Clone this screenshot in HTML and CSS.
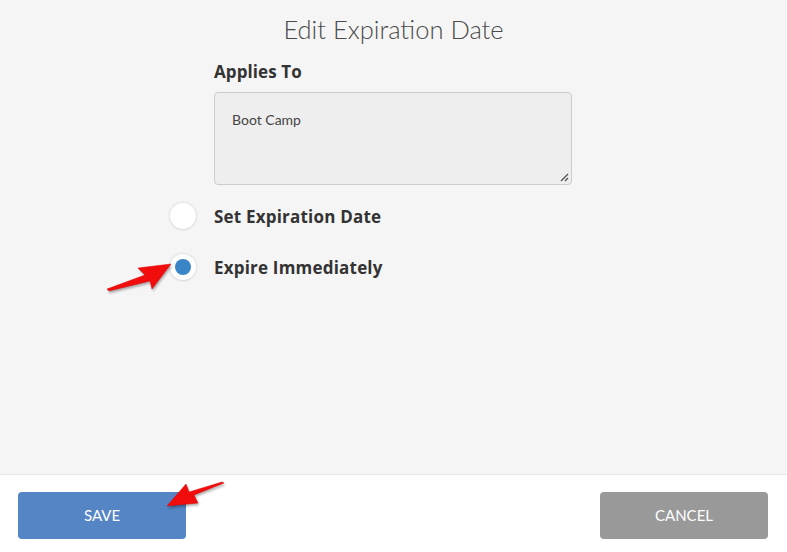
FILE: index.html
```html
<!DOCTYPE html>
<html>
<head>
<meta charset="utf-8">
<link rel="stylesheet" href="styles.css">
</head>
<body>
<div class="modal">
  <div class="main">
    <h1 class="title">Edit Expiration Date</h1>
    <div class="form">
      <div class="field">
        <div class="label">Applies To</div>
        <div class="textarea">Boot Camp
          <svg class="grip" width="10" height="10" viewBox="0 0 10 10"><path d="M2 9 L9 2 M6 9 L9 6" stroke="#555" stroke-width="1.4" fill="none"/></svg>
        </div>
      </div>
      <div class="radio-row">
        <span class="radio"></span>
        <span class="radio-label">Set Expiration Date</span>
      </div>
      <div class="radio-row">
        <span class="radio checked"><span class="dot"></span></span>
        <span class="radio-label">Expire Immediately</span>
      </div>
    </div>
  </div>
  <div class="footer">
    <button class="btn save">SAVE</button>
    <button class="btn cancel">CANCEL</button>
  </div>
  <svg class="arrow arrow1" width="80" height="40" viewBox="0 0 80 40">
    <path d="M2 33 L40 19 L33 12 L66 8 L47 33 L45 25 L4 35 Z" fill="#f20d0d" stroke="#d00" stroke-width="0.5"/>
  </svg>
  <svg class="arrow arrow2" width="70" height="40" viewBox="0 0 70 40">
    <path d="M60 3 L30 15 L34 23 L3 26 L22 4 L25 12 L58 2 Z" fill="#f20d0d" stroke="#d00" stroke-width="0.5"/>
  </svg>
</div>
</body>
</html>
```
FILE: styles.css
```css
html, body {
  margin: 0;
  padding: 0;
  width: 787px;
  height: 552px;
  overflow: hidden;
  font-family: Lato, "Open Sans", sans-serif;
}
.modal {
  position: relative;
  width: 787px;
  height: 552px;
  display: flex;
  flex-direction: column;
}
.main {
  background: #f5f5f5;
  height: 474px;
  box-sizing: border-box;
  padding-top: 12px;
}
.title {
  margin: 0;
  text-align: center;
  font-weight: 300;
  font-size: 25.5px;
  line-height: 34px;
  color: #4a4a4a;
}
.form {
  margin-left: 170px;
  width: 402px;
  margin-top: 15px;
}
.field {
  padding-left: 44px;
}
.label {
  font-family: "Open Sans", Lato, sans-serif;
  font-weight: 700;
  font-size: 17px;
  letter-spacing: 0.1px;
  line-height: 22px;
  color: #333;
}
.textarea {
  position: relative;
  margin-top: 9px;
  height: 93px;
  box-sizing: border-box;
  background: #eeeeee;
  border: 1px solid #cccccc;
  border-radius: 4px;
  padding: 17px 17px;
  font-size: 14px;
  color: #444;
  line-height: 20px;
}
.grip {
  position: absolute;
  right: 2px;
  bottom: 2px;
}
.radio-row {
  display: flex;
  align-items: center;
  gap: 18px;
  height: 26px;
  margin-top: 18px;
}
.radio-row + .radio-row {
  margin-top: 25px;
}
.radio {
  width: 26px;
  height: 26px;
  border-radius: 50%;
  background: #fff;
  box-shadow: 0 0 2px 1px rgba(0,0,0,0.08), 0 1px 2px rgba(0,0,0,0.06);
  display: flex;
  align-items: center;
  justify-content: center;
}
.dot {
  width: 16px;
  height: 16px;
  border-radius: 50%;
  background: #3a85c6;
}
.radio-label {
  font-family: "Open Sans", Lato, sans-serif;
  font-weight: 700;
  font-size: 17px;
  letter-spacing: 0.2px;
  color: #333;
}
.footer {
  flex: 1;
  background: #fff;
  border-top: 1px solid #e8e8e8;
  display: flex;
  justify-content: space-between;
  align-items: flex-start;
  padding: 17px 19px 0 18px;
}
.btn {
  width: 168px;
  height: 47px;
  border: none;
  border-radius: 4px;
  color: #fff;
  font-family: Lato, "Open Sans", sans-serif;
  font-size: 15px;
  padding-bottom: 2px;
}
.save { background: #5585c4; }
.cancel { background: #999999; }
.arrow {
  position: absolute;
  filter: drop-shadow(1px 2px 1px rgba(0,0,0,0.3));
}
.arrow1 { left: 105px; top: 256px; }
.arrow2 { left: 164px; top: 480px; }
```
